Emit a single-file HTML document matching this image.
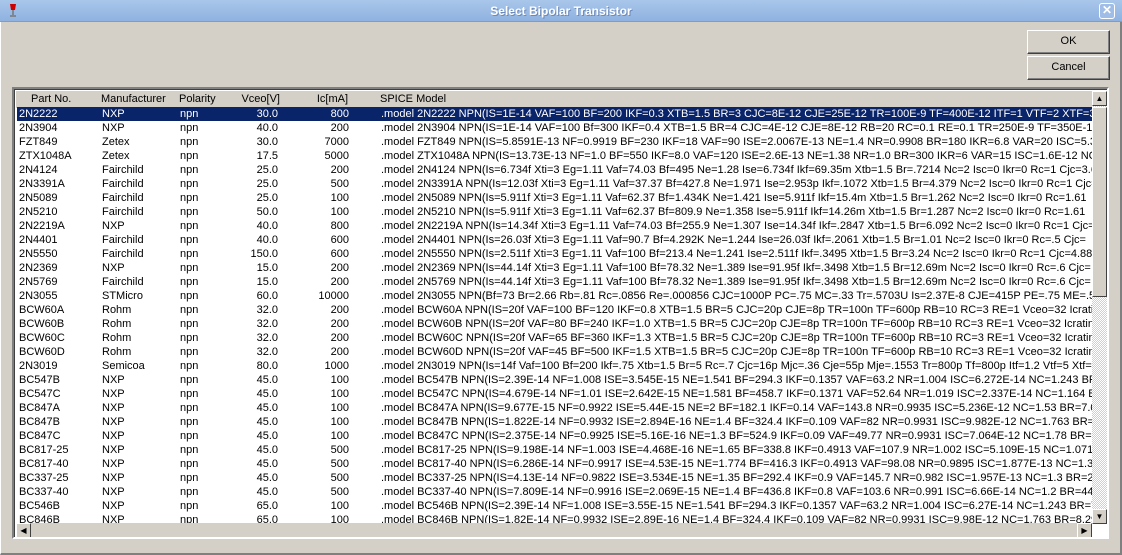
<!DOCTYPE html>
<html><head><meta charset="utf-8"><style>
*{margin:0;padding:0;box-sizing:border-box}
body{width:1122px;height:555px;overflow:hidden;background:#d4d0c8;font-family:"Liberation Sans",sans-serif;font-size:11px;position:relative}
.title{position:absolute;left:0;top:0;width:1122px;height:22px;background:linear-gradient(#a9c6ea,#8fb2e0);border-bottom:1px solid #7d9ccc}
.title .t{position:absolute;left:0;right:0;top:4px;text-align:center;color:#fff;font-weight:bold;font-size:12px;text-shadow:1px 1px 0 #6a88b8}
.close{position:absolute;left:1099px;top:3px;width:16px;height:16px;border:1px solid #fff;border-radius:3px;background:#9fbde6;color:#fff;font-size:12px;line-height:13px;text-align:center;font-weight:bold}
.frame{position:absolute;left:0;top:22px;width:1122px;height:533px;border-left:1px solid #fff;border-right:2px solid #808080;border-bottom:2px solid #808080}
.btn{position:absolute;left:1027px;width:83px;height:24px;background:#d4d0c8;border:1px solid;border-color:#fff #404040 #404040 #fff;box-shadow:inset -1px -1px 0 #808080;text-align:center;line-height:21px;font-size:11px}
.list{position:absolute;left:12px;top:87px;width:1097px;height:452px;border:2px solid;border-color:#808080 #fff #fff #808080;box-shadow:inset 1px 1px 0 #404040;background:#fff;overflow:hidden}
.hdr{position:absolute;left:2px;top:2px;width:1076px;height:17px;background:#d4d0c8}
.rows{position:absolute;left:3px;top:18px;width:1075px;height:418px;overflow:hidden}
.r{height:14px;line-height:14px;white-space:nowrap;position:relative}
.r span{position:absolute;top:0}
.sel{background:#0a246a;color:#fff}
.c1{left:2px}.c2{left:85px}.c3{left:163px}.c4{left:200px;width:61px;text-align:right}.c5{left:270px;width:62px;text-align:right}.c6{left:364px}
.vs{position:absolute;left:1078px;top:2px;width:15px;height:433px;background:repeating-conic-gradient(#fff 0 25%,#d4d0c8 0 50%) 0 0/2px 2px}
.arr{position:absolute;width:15px;height:15px;background:#d4d0c8;border:1px solid;border-color:#fff #404040 #404040 #fff;font-size:8px;text-align:center;line-height:13px}
.thumb{position:absolute;left:0;top:16px;width:15px;height:190px;background:#d4d0c8;border:1px solid;border-color:#fff #404040 #404040 #fff}
.hs{position:absolute;left:2px;top:434px;width:1076px;height:15px;background:#d4d0c8}
</style></head><body>
<div class="frame"></div>
<div class="title"><svg style="position:absolute;left:8px;top:3px" width="10" height="15"><path d="M2 1h6l-1 6h-4z" fill="#c00"/><path d="M5 7v5M2 13h6" stroke="#777" stroke-width="1.5"/></svg><div class="t">Select Bipolar Transistor</div><div class="close">✕</div></div>
<div class="btn" style="top:30px">OK</div>
<div class="btn" style="top:56px">Cancel</div>
<div class="list">
<div class="hdr"><div class="r" style="line-height:17px;height:17px"><span class="c1" style="left:15px">Part No.</span><span class="c2">Manufacturer</span><span class="c3">Polarity</span><span class="c4" style="left:203px">Vceo[V]</span><span class="c5" style="left:270px">Ic[mA]</span><span class="c6">SPICE Model</span></div></div>
<div class="rows">
<div class="r sel"><span class="c1">2N2222</span><span class="c2">NXP</span><span class="c3">npn</span><span class="c4">30.0</span><span class="c5">800</span><span class="c6">.model 2N2222 NPN(IS=1E-14 VAF=100 BF=200 IKF=0.3 XTB=1.5 BR=3 CJC=8E-12 CJE=25E-12 TR=100E-9 TF=400E-12 ITF=1 VTF=2 XTF=3 RB=10 RC=.3 RE=.2</span></div>
<div class="r"><span class="c1">2N3904</span><span class="c2">NXP</span><span class="c3">npn</span><span class="c4">40.0</span><span class="c5">200</span><span class="c6">.model 2N3904 NPN(IS=1E-14 VAF=100 Bf=300 IKF=0.4 XTB=1.5 BR=4 CJC=4E-12 CJE=8E-12 RB=20 RC=0.1 RE=0.1 TR=250E-9 TF=350E-12 ITF=1</span></div>
<div class="r"><span class="c1">FZT849</span><span class="c2">Zetex</span><span class="c3">npn</span><span class="c4">30.0</span><span class="c5">7000</span><span class="c6">.model FZT849 NPN(IS=5.8591E-13 NF=0.9919 BF=230 IKF=18 VAF=90 ISE=2.0067E-13 NE=1.4 NR=0.9908 BR=180 IKR=6.8 VAR=20 ISC=5.3E-13</span></div>
<div class="r"><span class="c1">ZTX1048A</span><span class="c2">Zetex</span><span class="c3">npn</span><span class="c4">17.5</span><span class="c5">5000</span><span class="c6">.model ZTX1048A NPN(IS=13.73E-13 NF=1.0 BF=550 IKF=8.0 VAF=120 ISE=2.6E-13 NE=1.38 NR=1.0 BR=300 IKR=6 VAR=15 ISC=1.6E-12 NC=1.2</span></div>
<div class="r"><span class="c1">2N4124</span><span class="c2">Fairchild</span><span class="c3">npn</span><span class="c4">25.0</span><span class="c5">200</span><span class="c6">.model 2N4124 NPN(Is=6.734f Xti=3 Eg=1.11 Vaf=74.03 Bf=495 Ne=1.28 Ise=6.734f Ikf=69.35m Xtb=1.5 Br=.7214 Nc=2 Isc=0 Ikr=0 Rc=1 Cjc=3.638p</span></div>
<div class="r"><span class="c1">2N3391A</span><span class="c2">Fairchild</span><span class="c3">npn</span><span class="c4">25.0</span><span class="c5">500</span><span class="c6">.model 2N3391A NPN(Is=12.03f Xti=3 Eg=1.11 Vaf=37.37 Bf=427.8 Ne=1.971 Ise=2.953p Ikf=.1072 Xtb=1.5 Br=4.379 Nc=2 Isc=0 Ikr=0 Rc=1 Cjc=</span></div>
<div class="r"><span class="c1">2N5089</span><span class="c2">Fairchild</span><span class="c3">npn</span><span class="c4">25.0</span><span class="c5">100</span><span class="c6">.model 2N5089 NPN(Is=5.911f Xti=3 Eg=1.11 Vaf=62.37 Bf=1.434K Ne=1.421 Ise=5.911f Ikf=15.4m Xtb=1.5 Br=1.262 Nc=2 Isc=0 Ikr=0 Rc=1.61</span></div>
<div class="r"><span class="c1">2N5210</span><span class="c2">Fairchild</span><span class="c3">npn</span><span class="c4">50.0</span><span class="c5">100</span><span class="c6">.model 2N5210 NPN(Is=5.911f Xti=3 Eg=1.11 Vaf=62.37 Bf=809.9 Ne=1.358 Ise=5.911f Ikf=14.26m Xtb=1.5 Br=1.287 Nc=2 Isc=0 Ikr=0 Rc=1.61</span></div>
<div class="r"><span class="c1">2N2219A</span><span class="c2">NXP</span><span class="c3">npn</span><span class="c4">40.0</span><span class="c5">800</span><span class="c6">.model 2N2219A NPN(Is=14.34f Xti=3 Eg=1.11 Vaf=74.03 Bf=255.9 Ne=1.307 Ise=14.34f Ikf=.2847 Xtb=1.5 Br=6.092 Nc=2 Isc=0 Ikr=0 Rc=1 Cjc=</span></div>
<div class="r"><span class="c1">2N4401</span><span class="c2">Fairchild</span><span class="c3">npn</span><span class="c4">40.0</span><span class="c5">600</span><span class="c6">.model 2N4401 NPN(Is=26.03f Xti=3 Eg=1.11 Vaf=90.7 Bf=4.292K Ne=1.244 Ise=26.03f Ikf=.2061 Xtb=1.5 Br=1.01 Nc=2 Isc=0 Ikr=0 Rc=.5 Cjc=</span></div>
<div class="r"><span class="c1">2N5550</span><span class="c2">Fairchild</span><span class="c3">npn</span><span class="c4">150.0</span><span class="c5">600</span><span class="c6">.model 2N5550 NPN(Is=2.511f Xti=3 Eg=1.11 Vaf=100 Bf=213.4 Ne=1.241 Ise=2.511f Ikf=.3495 Xtb=1.5 Br=3.24 Nc=2 Isc=0 Ikr=0 Rc=1 Cjc=4.883p</span></div>
<div class="r"><span class="c1">2N2369</span><span class="c2">NXP</span><span class="c3">npn</span><span class="c4">15.0</span><span class="c5">200</span><span class="c6">.model 2N2369 NPN(Is=44.14f Xti=3 Eg=1.11 Vaf=100 Bf=78.32 Ne=1.389 Ise=91.95f Ikf=.3498 Xtb=1.5 Br=12.69m Nc=2 Isc=0 Ikr=0 Rc=.6 Cjc=</span></div>
<div class="r"><span class="c1">2N5769</span><span class="c2">Fairchild</span><span class="c3">npn</span><span class="c4">15.0</span><span class="c5">200</span><span class="c6">.model 2N5769 NPN(Is=44.14f Xti=3 Eg=1.11 Vaf=100 Bf=78.32 Ne=1.389 Ise=91.95f Ikf=.3498 Xtb=1.5 Br=12.69m Nc=2 Isc=0 Ikr=0 Rc=.6 Cjc=</span></div>
<div class="r"><span class="c1">2N3055</span><span class="c2">STMicro</span><span class="c3">npn</span><span class="c4">60.0</span><span class="c5">10000</span><span class="c6">.model 2N3055 NPN(Bf=73 Br=2.66 Rb=.81 Rc=.0856 Re=.000856 CJC=1000P PC=.75 MC=.33 Tr=.5703U Is=2.37E-8 CJE=415P PE=.75 ME=.5</span></div>
<div class="r"><span class="c1">BCW60A</span><span class="c2">Rohm</span><span class="c3">npn</span><span class="c4">32.0</span><span class="c5">200</span><span class="c6">.model BCW60A NPN(IS=20f VAF=100 BF=120 IKF=0.8 XTB=1.5 BR=5 CJC=20p CJE=8p TR=100n TF=600p RB=10 RC=3 RE=1 Vceo=32 Icrating=200m</span></div>
<div class="r"><span class="c1">BCW60B</span><span class="c2">Rohm</span><span class="c3">npn</span><span class="c4">32.0</span><span class="c5">200</span><span class="c6">.model BCW60B NPN(IS=20f VAF=80 BF=240 IKF=1.0 XTB=1.5 BR=5 CJC=20p CJE=8p TR=100n TF=600p RB=10 RC=3 RE=1 Vceo=32 Icrating=200m</span></div>
<div class="r"><span class="c1">BCW60C</span><span class="c2">Rohm</span><span class="c3">npn</span><span class="c4">32.0</span><span class="c5">200</span><span class="c6">.model BCW60C NPN(IS=20f VAF=65 BF=360 IKF=1.3 XTB=1.5 BR=5 CJC=20p CJE=8p TR=100n TF=600p RB=10 RC=3 RE=1 Vceo=32 Icrating=200m</span></div>
<div class="r"><span class="c1">BCW60D</span><span class="c2">Rohm</span><span class="c3">npn</span><span class="c4">32.0</span><span class="c5">200</span><span class="c6">.model BCW60D NPN(IS=20f VAF=45 BF=500 IKF=1.5 XTB=1.5 BR=5 CJC=20p CJE=8p TR=100n TF=600p RB=10 RC=3 RE=1 Vceo=32 Icrating=200m</span></div>
<div class="r"><span class="c1">2N3019</span><span class="c2">Semicoa</span><span class="c3">npn</span><span class="c4">80.0</span><span class="c5">1000</span><span class="c6">.model 2N3019 NPN(Is=14f Vaf=100 Bf=200 Ikf=.75 Xtb=1.5 Br=5 Rc=.7 Cjc=16p Mjc=.36 Cje=55p Mje=.1553 Tr=800p Tf=800p Itf=1.2 Vtf=5 Xtf=2</span></div>
<div class="r"><span class="c1">BC547B</span><span class="c2">NXP</span><span class="c3">npn</span><span class="c4">45.0</span><span class="c5">100</span><span class="c6">.model BC547B NPN(IS=2.39E-14 NF=1.008 ISE=3.545E-15 NE=1.541 BF=294.3 IKF=0.1357 VAF=63.2 NR=1.004 ISC=6.272E-14 NC=1.243 BR=7.946</span></div>
<div class="r"><span class="c1">BC547C</span><span class="c2">NXP</span><span class="c3">npn</span><span class="c4">45.0</span><span class="c5">100</span><span class="c6">.model BC547C NPN(IS=4.679E-14 NF=1.01 ISE=2.642E-15 NE=1.581 BF=458.7 IKF=0.1371 VAF=52.64 NR=1.019 ISC=2.337E-14 NC=1.164 BR=3.8</span></div>
<div class="r"><span class="c1">BC847A</span><span class="c2">NXP</span><span class="c3">npn</span><span class="c4">45.0</span><span class="c5">100</span><span class="c6">.model BC847A NPN(IS=9.677E-15 NF=0.9922 ISE=5.44E-15 NE=2 BF=182.1 IKF=0.14 VAF=143.8 NR=0.9935 ISC=5.236E-12 NC=1.53 BR=7.001</span></div>
<div class="r"><span class="c1">BC847B</span><span class="c2">NXP</span><span class="c3">npn</span><span class="c4">45.0</span><span class="c5">100</span><span class="c6">.model BC847B NPN(IS=1.822E-14 NF=0.9932 ISE=2.894E-16 NE=1.4 BF=324.4 IKF=0.109 VAF=82 NR=0.9931 ISC=9.982E-12 NC=1.763 BR=8.29</span></div>
<div class="r"><span class="c1">BC847C</span><span class="c2">NXP</span><span class="c3">npn</span><span class="c4">45.0</span><span class="c5">100</span><span class="c6">.model BC847C NPN(IS=2.375E-14 NF=0.9925 ISE=5.16E-16 NE=1.3 BF=524.9 IKF=0.09 VAF=49.77 NR=0.9931 ISC=7.064E-12 NC=1.78 BR=10.66</span></div>
<div class="r"><span class="c1">BC817-25</span><span class="c2">NXP</span><span class="c3">npn</span><span class="c4">45.0</span><span class="c5">500</span><span class="c6">.model BC817-25 NPN(IS=9.198E-14 NF=1.003 ISE=4.468E-16 NE=1.65 BF=338.8 IKF=0.4913 VAF=107.9 NR=1.002 ISC=5.109E-15 NC=1.071 BR=29</span></div>
<div class="r"><span class="c1">BC817-40</span><span class="c2">NXP</span><span class="c3">npn</span><span class="c4">45.0</span><span class="c5">500</span><span class="c6">.model BC817-40 NPN(IS=6.286E-14 NF=0.9917 ISE=4.53E-15 NE=1.774 BF=416.3 IKF=0.4913 VAF=98.08 NR=0.9895 ISC=1.877E-13 NC=1.3 BR=</span></div>
<div class="r"><span class="c1">BC337-25</span><span class="c2">NXP</span><span class="c3">npn</span><span class="c4">45.0</span><span class="c5">500</span><span class="c6">.model BC337-25 NPN(IS=4.13E-14 NF=0.9822 ISE=3.534E-15 NE=1.35 BF=292.4 IKF=0.9 VAF=145.7 NR=0.982 ISC=1.957E-13 NC=1.3 BR=23.68</span></div>
<div class="r"><span class="c1">BC337-40</span><span class="c2">NXP</span><span class="c3">npn</span><span class="c4">45.0</span><span class="c5">500</span><span class="c6">.model BC337-40 NPN(IS=7.809E-14 NF=0.9916 ISE=2.069E-15 NE=1.4 BF=436.8 IKF=0.8 VAF=103.6 NR=0.991 ISC=6.66E-14 NC=1.2 BR=44.1</span></div>
<div class="r"><span class="c1">BC546B</span><span class="c2">NXP</span><span class="c3">npn</span><span class="c4">65.0</span><span class="c5">100</span><span class="c6">.model BC546B NPN(IS=2.39E-14 NF=1.008 ISE=3.55E-15 NE=1.541 BF=294.3 IKF=0.1357 VAF=63.2 NR=1.004 ISC=6.27E-14 NC=1.243 BR=7.95</span></div>
<div class="r"><span class="c1">BC846B</span><span class="c2">NXP</span><span class="c3">npn</span><span class="c4">65.0</span><span class="c5">100</span><span class="c6">.model BC846B NPN(IS=1.82E-14 NF=0.9932 ISE=2.89E-16 NE=1.4 BF=324.4 IKF=0.109 VAF=82 NR=0.9931 ISC=9.98E-12 NC=1.763 BR=8.29 1</span></div>
</div>
<div class="vs"><div class="arr" style="left:0;top:0">▲</div><div class="thumb"></div><div class="arr" style="left:0;top:418px">▼</div></div>
<div class="hs"><div class="arr" style="left:0;top:0">◀</div><div class="arr" style="left:1061px;top:0">▶</div></div>
</div>
</body></html>
